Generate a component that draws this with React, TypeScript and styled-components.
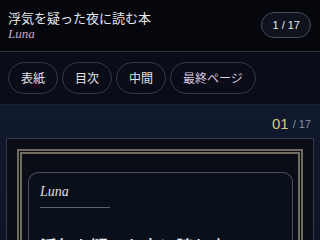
import React from "react";
import styled, { createGlobalStyle } from "styled-components";

const Global = createGlobalStyle`
  html, body { margin: 0; padding: 0; background: #05070d; }
  body { font-family: "Noto Sans CJK JP", "Noto Sans", sans-serif; }
  * { box-sizing: border-box; }
`;

const Screen = styled.div`
  width: 320px;
  height: 240px;
  overflow: hidden;
  display: flex;
  flex-direction: column;
  background: #05070d;
`;

const Header = styled.header`
  height: 52px;
  flex: none;
  display: flex;
  align-items: center;
  justify-content: space-between;
  padding: 0 9px 0 8px;
  background: #05070d;
  border-bottom: 1px solid #2c313c;
`;

const TitleBlock = styled.div`
  display: flex;
  flex-direction: column;
  margin-top: -1px;
`;

const Title = styled.h1`
  margin: 0;
  font-size: 13px;
  line-height: 17px;
  font-weight: 400;
  color: #e6e8ee;
  font-family: "Noto Sans CJK JP", sans-serif;
`;

const Author = styled.div`
  font-family: "Liberation Serif", "DejaVu Serif", serif;
  font-style: italic;
  font-size: 13px;
  line-height: 16px;
  color: #c8a6d2;
`;

const Badge = styled.div`
  height: 26px;
  padding: 0 10px;
  border-radius: 13px;
  border: 1px solid #464c58;
  background: #0e131d;
  color: #e6e8ee;
  font-family: "Liberation Sans", Arial, sans-serif;
  font-size: 11px;
  display: flex;
  align-items: center;
  margin-top: -1px;
`;

const Nav = styled.nav`
  height: 53px;
  flex: none;
  display: flex;
  align-items: center;
  gap: 4px;
  padding: 0 8px;
  background: #0a0d17;
  border-bottom: 1px solid #1c2333;
`;

const NavButton = styled.button<{ $accent?: boolean }>`
  height: 32px;
  padding: 0 12px;
  border-radius: 16px;
  border: 1px solid #33384a;
  background: transparent;
  color: ${(p) => (p.$accent ? "#dcc8e0" : "#e0e2e8")};
  font-family: "Noto Sans CJK JP", sans-serif;
  font-size: 12px;
  line-height: 1;
  cursor: pointer;
`;

const Main = styled.main`
  flex: 1;
  background: linear-gradient(180deg, #111a2e 0%, #0d1424 100%);
  display: flex;
  flex-direction: column;
  padding: 0 6px;
`;

const PageRow = styled.div`
  height: 33px;
  flex: none;
  display: flex;
  align-items: center;
  justify-content: flex-end;
  gap: 4px;
  padding-right: 3px;
  padding-top: 3px;
  font-family: "Liberation Sans", Arial, sans-serif;
`;

const PageNow = styled.span`
  color: #d8c77e;
  font-size: 15px;
`;

const PageTotal = styled.span`
  color: #8a8f9c;
  font-size: 11px;
  margin-top: 2px;
`;

const Frame = styled.section`
  flex: 1;
  border: 1px solid #363b48;
  border-bottom: none;
  border-radius: 2px 2px 0 0;
  background: #0a0d15;
  padding: 10px 10px 0;
  display: flex;
`;

const Ornament = styled.div`
  flex: 1;
  border: 5px double #6f6c5e;
  border-bottom: none;
  padding: 18px 5px 0 6px;
  display: flex;
`;

const Card = styled.article`
  flex: 1;
  border: 1px solid #4a4f5d;
  border-bottom: none;
  border-radius: 10px 10px 0 0;
  background: #0a0f1c;
  padding: 10px 11px 0;
`;

const CardAuthor = styled.div`
  font-family: "Liberation Serif", "DejaVu Serif", serif;
  font-style: italic;
  font-size: 14px;
  line-height: 18px;
  color: #e4ddcf;
`;

const Rule = styled.div`
  width: 70px;
  height: 1px;
  background: #5d6272;
  margin-top: 6px;
`;

const Heading = styled.h2`
  margin: 25px 0 0;
  font-family: "Noto Sans CJK JP", sans-serif;
  font-size: 17px;
  font-weight: 500;
  color: #eef0f4;
  white-space: nowrap;
`;

export default function App() {
  return (
    <>
      <Global />
      <Screen>
        <Header>
          <TitleBlock>
            <Title>浮気を疑った夜に読む本</Title>
            <Author>Luna</Author>
          </TitleBlock>
          <Badge>1 / 17</Badge>
        </Header>
        <Nav>
          <NavButton>表紙</NavButton>
          <NavButton>目次</NavButton>
          <NavButton>中間</NavButton>
          <NavButton $accent>最終ページ</NavButton>
        </Nav>
        <Main>
          <PageRow>
            <PageNow>01</PageNow>
            <PageTotal>/ 17</PageTotal>
          </PageRow>
          <Frame>
            <Ornament>
              <Card>
                <CardAuthor>Luna</CardAuthor>
                <Rule />
                <Heading>浮気を疑った夜に読む本</Heading>
              </Card>
            </Ornament>
          </Frame>
        </Main>
      </Screen>
    </>
  );
}
